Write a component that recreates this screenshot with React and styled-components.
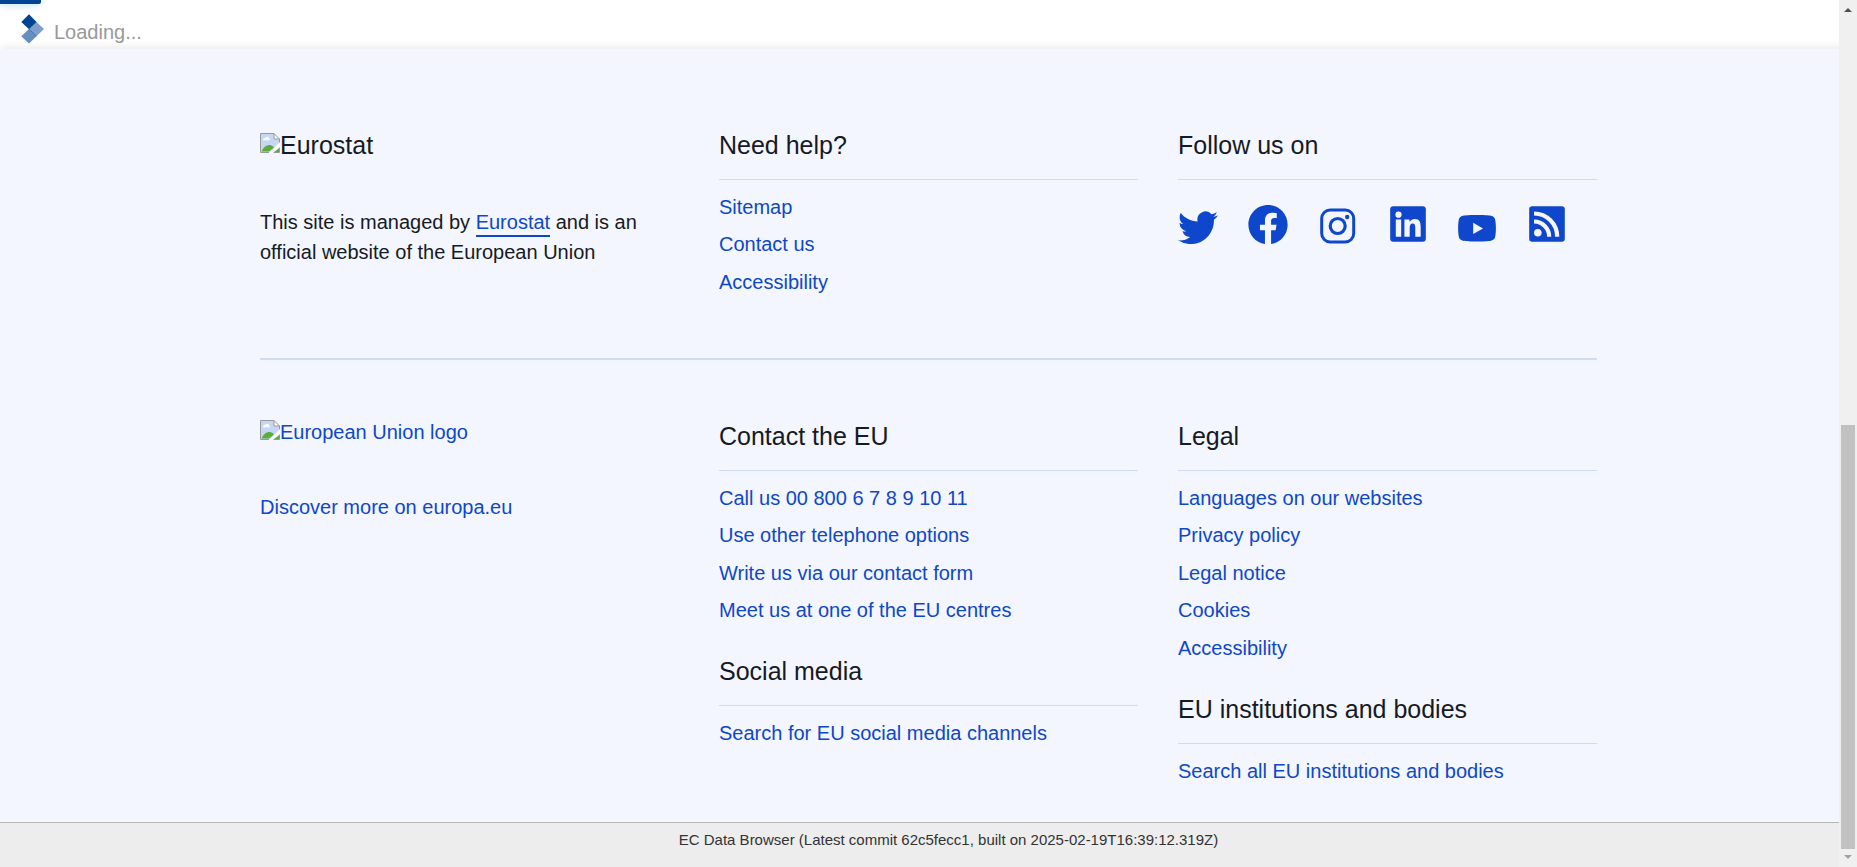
import React from "react";
import styled, { createGlobalStyle } from "styled-components";

const GlobalStyle = createGlobalStyle`
  *, *::before, *::after { box-sizing: border-box; }
  body {
    margin: 0;
    background: #ededed;
    color: #171a22;
    font-family: "Liberation Sans", Arial, sans-serif;
    font-size: 20px;
    line-height: 30px;
  }
`;

const Page = styled.div`
  display: flex;
  flex-direction: column;
  min-height: 100vh;
`;

const Header = styled.header`
  display: flex;
  flex-direction: column;
  height: 49px;
  background: #fff;
`;

const Progress = styled.div`
  width: 41px;
  height: 4px;
  border-radius: 0 0 2px 0;
  background: #004494;
  box-shadow: 0 0 8px #8ecaee;
`;

const LoadingRow = styled.div`
  display: flex;
  align-items: flex-start;
  gap: 9px;
  padding: 10px 20px 0;
  color: #999;
`;

const LoadingText = styled.span`
  padding-top: 3px;
`;

const Footer = styled.footer`
  position: relative;
  padding: 0 20px;
  background: #f3f6ff;
  box-shadow: 0 0 10px rgba(0, 0, 40, 0.12);
`;

const Container = styled.div`
  max-width: 1337px;
  margin: 0 auto;
`;

const Section = styled.section`
  display: grid;
  grid-template-columns: repeat(3, minmax(0, 1fr));
  gap: 40px;
  padding: ${(p) => (p.$second ? "59px 0 36px" : "79px 0 61px")};
  border-top: ${(p) => (p.$second ? "2px solid #cfdaf5" : "0")};

  @media (max-width: 800px) {
    grid-template-columns: 1fr;
  }
`;

const Column = styled.div`
  display: flex;
  flex-direction: column;
  gap: 29px;
`;

const Heading = styled.h2`
  margin: 0;
  padding-bottom: 16px;
  border-bottom: 1px solid #cfdaf5;
  font-size: 25px;
  font-weight: 400;
  line-height: 35px;
`;

const LinkList = styled.ul`
  margin: 12px 0 0;
  padding: 0;
  list-style: none;

  li + li { margin-top: 8px; }
  li:nth-child(even) { margin-top: 7px; }
`;

const Link = styled.a`
  color: #0e47cb;
  text-decoration: none;
`;

const UnderlinedLink = styled(Link)`
  padding-bottom: 2px;
  border-bottom: 2px solid #0e47cb;
`;

const Brand = styled.div`
  display: flex;
  align-items: flex-start;
  font-size: 25px;
  line-height: 35px;

  svg { margin-top: 5px; }
`;

const BrandLink = styled(Link)`
  display: flex;
  align-items: flex-start;
  line-height: 26px;

  svg { margin-top: 1px; }
`;

const LeftColumn = styled.div`
  display: flex;
  flex-direction: column;
  gap: 44px;
`;

const LowerLeftColumn = styled(LeftColumn)`
  gap: 47px;
`;

const Paragraph = styled.p`
  margin: 0;
`;

const SocialList = styled.ul`
  display: flex;
  flex-wrap: wrap;
  gap: 30px;
  margin: 24px 0 0;
  padding: 0;
  list-style: none;
`;

const SocialLink = styled.a`
  display: block;
  color: #0e47cb;

  svg { display: block; }
`;

const BuildInfo = styled.div`
  position: relative;
  flex: 1;
  min-height: 45px;
  padding: 5px 0 9px 40px;
  border-top: 1px solid #b8b8b8;
  background: #ededed;
  color: #333;
  font-size: 15px;
  line-height: 24px;
  text-align: center;
`;

const Scrollbar = styled.div`
  position: fixed;
  inset: 0 0 0 auto;
  display: flex;
  flex-direction: column;
  align-items: center;
  width: 18px;
  background: #f0f0f0;
`;

const ScrollSpace = styled.div`
  flex: 407;
`;

const ScrollThumb = styled.div`
  flex: 424;
  width: 14px;
  background: #c1c1c1;
`;

const BrokenImage = () => (
  <svg width="20" height="20" viewBox="0 0 20 20" aria-hidden="true">
    <path d="M1 1H14L19 6V19H1Z" fill="#c6d7f5" />
    <path d="M3 6.500a2 2 0 0 1 2-1.500a2.300 2.300 0 0 1 4.300 .6a1 1 0 0 1 0 1.600H3Z" fill="#fff" />
    <path d="M1.500 18.500C3.500 14 6.500 12 9.500 12c2 0 3.500 1 4.500 2.500L9 18.500Z" fill="#5aad38" />
    <path d="M9 20L19.500 9.500V14L13.500 20Z" fill="#fff" />
    <path d="M14 19L19 15.500V19Z" fill="#5aad38" />
    <path d="M14 1V6H19Z" fill="#fff" />
    <path d="M9 19.500H.5V.5H14L19.500 6V9.500M14 .5V6H19.500M19.500 14.500V19.500H13.500" fill="none" stroke="#999" />
  </svg>
);

const LoaderLogo = () => (
  <svg width="25" height="30" viewBox="20 14 25 30" aria-hidden="true">
    <path d="M36.300 21.700L44 29L36.500 36.300L29 29Z" fill="#7f9fcb" />
    <path d="M29 29L36.500 36.300L29 43.500L21.300 36.300Z" fill="#668fbf" />
    <path d="M29 14.300L36.500 22L29 29.300L21.300 22Z" fill="#004494" />
    <path d="M29 29L36.300 36" stroke="#3f72b0" strokeWidth="1" />
  </svg>
);

const socials = [
  {
    name: "Twitter",
    art: (
      <path
        transform="translate(0 3.800) scale(1.6667)"
        d="M23.953 4.570a10 10 0 01-2.825.775 4.958 4.958 0 002.163-2.723c-.951.555-2.005.959-3.127 1.184a4.920 4.920 0 00-8.384 4.482C7.690 8.095 4.067 6.130 1.640 3.162a4.822 4.822 0 00-.666 2.475c0 1.710.870 3.213 2.188 4.096a4.904 4.904 0 01-2.228-.616v.060a4.923 4.923 0 003.946 4.827 4.996 4.996 0 01-2.212.085 4.936 4.936 0 004.604 3.417 9.867 9.867 0 01-6.102 2.105c-.390 0-.779-.023-1.170-.067a13.995 13.995 0 007.557 2.209c9.053 0 13.998-7.496 13.998-13.985 0-.210 0-.420-.015-.630A9.935 9.935 0 0024 4.590z"
      />
    ),
  },
  {
    name: "Facebook",
    art: (
      <path
        transform="translate(.400 .900) scale(1.6350)"
        d="M24 12.073c0-6.627-5.373-12-12-12s-12 5.373-12 12c0 5.990 4.388 10.954 10.125 11.854v-8.385H7.078v-3.470h3.047V9.430c0-3.007 1.792-4.669 4.533-4.669 1.312 0 2.686.235 2.686.235v2.953H15.830c-1.491 0-1.956.925-1.956 1.874v2.250h3.328l-.532 3.470h-2.796v8.385C19.612 23.027 24 18.062 24 12.073z"
      />
    ),
  },
  {
    name: "Instagram",
    art: (
      <>
        <rect x="3.700" y="6" width="32" height="32" rx="8.500" fill="none" stroke="currentColor" strokeWidth="3" />
        <circle cx="19.700" cy="22" r="7.500" fill="none" stroke="currentColor" strokeWidth="3.200" />
        <circle cx="29.200" cy="13" r="2.200" />
      </>
    ),
  },
  {
    name: "LinkedIn",
    art: (
      <>
        <rect x="2.200" y="2.200" width="35.600" height="35.600" rx="3" />
        <g fill="#f3f6ff">
          <circle cx="10.500" cy="10.700" r="3.100" />
          <path d="M7.800 15.500H13.200V32.700H7.800ZM16.400 15.500H21.500V18C22.700 16 24.600 15 26.800 15C31.500 15 32.700 18 32.700 23V32.700H27.300V24.500C27.300 21.500 26.900 19.600 24.700 19.600C22.400 19.600 21.700 21.300 21.700 24.200V32.700H16.400Z" />
        </g>
      </>
    ),
  },
  {
    name: "YouTube",
    art: (
      <g transform="translate(-1 0)">
        <path d="M20 11C26 11 31.500 11.200 34 11.700C36.500 12.200 37.900 13.500 38.300 16C39.100 21 39.100 27.500 38.300 32.300C37.900 34.800 36.500 36.200 34 36.700C29 37.700 11 37.700 6 36.700C3.500 36.200 2.100 34.800 1.700 32.300C.9 27.500 .9 21 1.700 16C2.100 13.500 3.500 12.200 6 11.700C8.500 11.200 14 11 20 11Z" />
        <path d="M16.200 18.700V30L26 24.400Z" fill="#f3f6ff" />
      </g>
    ),
  },
  {
    name: "RSS",
    art: (
      <g transform="translate(-1 0)">
        <rect x="2.200" y="2.200" width="35.600" height="35.600" rx="3" />
        <circle cx="10.800" cy="28.800" r="3.800" fill="#f3f6ff" />
        <path d="M7 17.500A15.200 15.200 0 0 1 22.200 32.700M7 9.500A23.200 23.200 0 0 1 30.200 32.700" fill="none" stroke="#f3f6ff" strokeWidth="4.200" />
      </g>
    ),
  },
];

const LinkGroup = ({ title, links }) => (
  <nav aria-label={title}>
    <Heading>{title}</Heading>
    <LinkList>
      {links.map((text) => (
        <li key={text}>
          <Link href="#">{text}</Link>
        </li>
      ))}
    </LinkList>
  </nav>
);

export default function App() {
  return (
    <Page>
      <GlobalStyle />
      <Header>
        <Progress />
        <LoadingRow role="status">
          <LoaderLogo />
          <LoadingText>Loading...</LoadingText>
        </LoadingRow>
      </Header>

      <Footer>
        <Container>
          <Section>
            <LeftColumn>
              <Brand>
                <BrokenImage />
                <span>Eurostat</span>
              </Brand>
              <Paragraph>
                This site is managed by <UnderlinedLink href="#">Eurostat</UnderlinedLink> and is an official website
                of the European Union
              </Paragraph>
            </LeftColumn>
            <Column>
              <LinkGroup title="Need help?" links={["Sitemap", "Contact us", "Accessibility"]} />
            </Column>
            <div>
              <Heading>Follow us on</Heading>
              <SocialList>
                {socials.map(({ name, art }) => (
                  <li key={name}>
                    <SocialLink href="#" aria-label={name}>
                      <svg width="40" height="40" viewBox="0 0 40 40" fill="currentColor" aria-hidden="true">
                        {art}
                      </svg>
                    </SocialLink>
                  </li>
                ))}
              </SocialList>
            </div>
          </Section>

          <Section $second>
            <LowerLeftColumn>
              <BrandLink href="#">
                <BrokenImage />
                <span>European Union logo</span>
              </BrandLink>
              <Link href="#">Discover more on europa.eu</Link>
            </LowerLeftColumn>
            <Column>
              <LinkGroup
                title="Contact the EU"
                links={[
                  "Call us 00 800 6 7 8 9 10 11",
                  "Use other telephone options",
                  "Write us via our contact form",
                  "Meet us at one of the EU centres",
                ]}
              />
              <LinkGroup title="Social media" links={["Search for EU social media channels"]} />
            </Column>
            <Column>
              <LinkGroup
                title="Legal"
                links={["Languages on our websites", "Privacy policy", "Legal notice", "Cookies", "Accessibility"]}
              />
              <LinkGroup title="EU institutions and bodies" links={["Search all EU institutions and bodies"]} />
            </Column>
          </Section>
        </Container>
      </Footer>

      <BuildInfo>EC Data Browser (Latest commit 62c5fecc1, built on 2025-02-19T16:39:12.319Z)</BuildInfo>

      <Scrollbar aria-hidden="true">
        <svg width="18" height="18" viewBox="0 0 18 18">
          <path d="M5 12L9 8L13 12Z" fill="#505050" />
        </svg>
        <ScrollSpace />
        <ScrollThumb />
        <svg width="18" height="18" viewBox="0 0 18 18">
          <path d="M5 6L9 10L13 6Z" fill="#a3a3a3" />
        </svg>
      </Scrollbar>
    </Page>
  );
}
